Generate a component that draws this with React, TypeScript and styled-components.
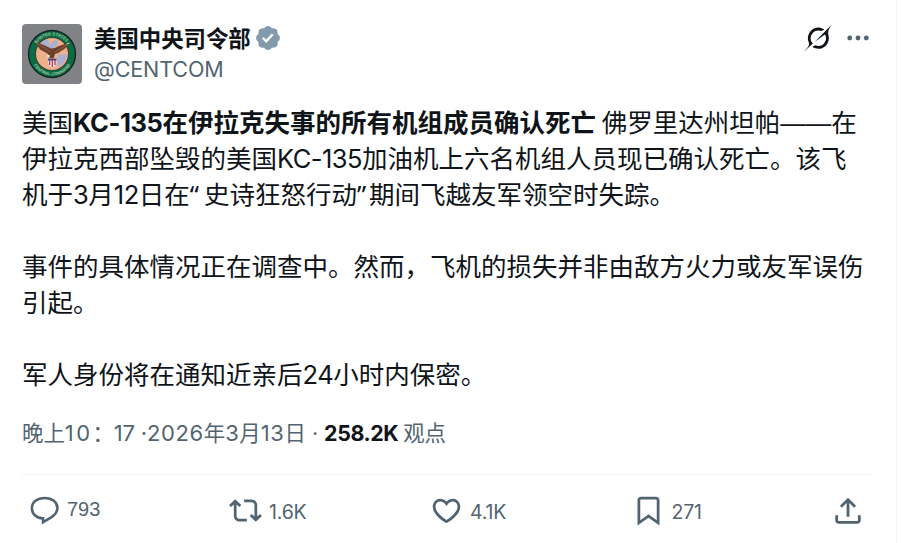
import React from "react";
import styled, { createGlobalStyle } from "styled-components";

const Tweet = () => {
  return (
    <Card>
      <Header>
        <Avatar>
          <Seal />
        </Avatar>
        <Names>
          <NameRow>
            <DisplayName>美国中央司令部</DisplayName>
            <Icon $size={28} viewBox="0 0 22 22" $color="#829aab">
              <path d={paths.verified} />
            </Icon>
          </NameRow>
          <Handle>@CENTCOM</Handle>
        </Names>
        <HeaderActions>
          <Icon $size={28} viewBox="0 0 33 32" $color="#0f1419">
            <path d={paths.grok} />
          </Icon>
          <Icon $size={26} viewBox="0 0 26 26">
            <circle cx="4.7" cy="13" r="2.4" />
            <circle cx="13" cy="13" r="2.4" />
            <circle cx="21.3" cy="13" r="2.4" />
          </Icon>
        </HeaderActions>
      </Header>

      <Body>
        <Line>
          美国
          <strong>
            <Latin $spacing={-0.4}>KC-135</Latin>在伊拉克失事的所有机组成员确认死亡
          </strong>{" "}
          佛罗里达州坦帕<Dash>——</Dash>在
        </Line>
        <Line>
          伊拉克西部坠毁的美国<Latin $spacing={-0.55}>KC-135</Latin>
          加油机上六名机组人员现已确认死亡。该飞
        </Line>
        <Line>
          机于<Latin>3</Latin>月<Latin>12</Latin>日在<Quote $spacing={5}>“</Quote>
          史诗狂怒行动<Quote $spacing={3}>”</Quote>期间飞越友军领空时失踪。
        </Line>
        <Line />
        <Line>事件的具体情况正在调查中。然而，飞机的损失并非由敌方火力或友军误伤</Line>
        <Line>引起。</Line>
        <Line />
        <Line>
          军人身份将在通知近亲后<Latin>24</Latin>小时内保密。
        </Line>
      </Body>

      <Meta>
        晚上<MetaLatin $spacing={2.4}>10</MetaLatin>：
        <MetaLatin $spacing={-0.2}>17 ·</MetaLatin>
        <MetaLatin $spacing={0.6}>2026</MetaLatin>年
        <MetaLatin $spacing={0.6}>3</MetaLatin>月
        <MetaLatin $spacing={0.6}>13</MetaLatin>日<Dot> · </Dot>
        <Views>258.2K</Views> 观点
      </Meta>

      <Actions>
        <Action>
          <ReplyIcon />
          <Count $plain>793</Count>
        </Action>
        <Action>
          <Icon $size={33} viewBox="0 0 24 24">
            <path d={paths.repost} />
          </Icon>
          <Count>1.6K</Count>
        </Action>
        <Action>
          <Icon $size={33} viewBox="0 0 24 24">
            <path d={paths.like} />
          </Icon>
          <Count>4.1K</Count>
        </Action>
        <Action>
          <Icon $size={33} viewBox="0 0 24 24">
            <path d={paths.bookmark} />
          </Icon>
          <Count>271</Count>
        </Action>
        <Action>
          <Icon $size={34} viewBox="0 0 24 24">
            <path d={paths.share} />
          </Icon>
        </Action>
      </Actions>
    </Card>
  );
};

const ReplyIcon = () => (
  <Icon $size={33} viewBox="0 0 33 33">
    <path
      d="M14.8 24.4C8.3 24 3.9 19.7 3.9 14.2C3.9 8.2 9.2 4 16.7 4S29.4 8.2 29.4 14C29.4 18.4 26.4 21.5 22.4 23.8L15 28.2V24.4Z"
      fill="none"
      stroke="#536471"
      strokeWidth="2.6"
    />
  </Icon>
);

const Seal = () => (
  <svg width="50" height="50" viewBox="0 0 50 50">
    <defs>
      <path id="sealTop" d="M6.4 25a18.6 18.6 0 0 1 37.2 0" />
      <path id="sealBottom" d="M3.6 25a21.4 21.4 0 0 0 42.8 0" />
    </defs>
    <circle cx="25" cy="25" r="24.2" fill="#10251f" />
    <circle cx="25" cy="25" r="22.8" fill="#0b6b45" />
    <circle cx="25" cy="25" r="16.8" fill="#3f3a2d" />
    <circle cx="25" cy="25" r="16" fill="#eeb08a" />
    <path d="M12 17l4-5 5-2 2 6 4-5 4 1-1 5-6 3zM31 25l5 1 4-1-1 6-4 5-4 2-1-6z" fill="#a9b0d3" />
    <path
      d="M7.5 12.3Q14 15 19 17L24 19.5L28 19Q33 16 42.5 14L38 19.5L31 24L28 25L26.5 29.5L22.5 29L20.5 24.5L13 20.5Z"
      fill="#6b402a"
    />
    <path d="M10 14.8l8 4.5 5 3.5M40 15.8l-8 5-4 2" stroke="#94623d" fill="none" />
    <path d="M7.5 12.3l3 1.5M42.5 14l-3 1.2" stroke="#d8d0c0" />
    <circle cx="21.5" cy="27" r="1.3" fill="#f2eadf" />
    <path d="M21 29.5h8.5v5q-1 3-4.2 4.3Q22 37.5 21 34.5z" fill="#f4e6e8" />
    <path d="M22.6 31v5M25.3 31v7M28 31v5" stroke="#b5364c" strokeWidth="1.3" />
    <path d="M21 29.5h8.5v2h-8.5z" fill="#4a4676" />
    <SealText>
      <textPath href="#sealTop" startOffset="50%" textAnchor="middle">
        UNITED STATES
      </textPath>
    </SealText>
    <SealText>
      <textPath href="#sealBottom" startOffset="50%" textAnchor="middle">
        CENTRAL COMMAND
      </textPath>
    </SealText>
  </svg>
);

const paths = {
  verified:
    "M20.396 11c-.018-.646-.215-1.275-.57-1.816-.354-.54-.852-.972-1.438-1.246.223-.607.27-1.264.14-1.897-.131-.634-.437-1.218-.882-1.687-.47-.445-1.053-.75-1.687-.882-.633-.13-1.29-.083-1.897.14-.273-.587-.704-1.086-1.245-1.44S11.647 1.62 11 1.604c-.646.017-1.273.213-1.813.568s-.969.854-1.24 1.44c-.608-.223-1.267-.272-1.902-.14-.635.13-1.22.436-1.69.882-.445.47-.749 1.055-.878 1.688-.13.633-.08 1.29.144 1.896-.587.274-1.087.705-1.443 1.245-.356.54-.555 1.17-.574 1.817.02.647.218 1.276.574 1.817.356.54.856.972 1.443 1.245-.224.606-.274 1.263-.144 1.896.13.634.433 1.218.877 1.688.47.443 1.054.747 1.687.878.633.132 1.29.084 1.897-.136.274.586.705 1.084 1.246 1.439.54.354 1.17.551 1.816.569.647-.016 1.276-.213 1.817-.567s.972-.854 1.245-1.44c.604.239 1.266.296 1.903.164.636-.132 1.22-.447 1.68-.907.46-.46.776-1.044.908-1.681s.075-1.299-.165-1.903c.586-.274 1.084-.705 1.439-1.246.354-.54.551-1.17.569-1.816zM9.662 14.85l-3.429-3.428 1.293-1.302 2.072 2.072 4.4-4.794 1.347 1.246z",
  grok: "M12.745 20.54l10.97-8.19c.539-.4 1.307-.244 1.564.38 1.349 3.288.746 7.241-1.938 9.955-2.683 2.714-6.417 3.31-9.83 1.954l-3.728 1.745c5.347 3.697 11.84 2.782 15.898-1.324 3.219-3.255 4.216-7.692 3.284-11.693l.008.009c-1.351-5.878.332-8.227 3.782-13.031L33 0l-4.54 4.59v-.014L12.743 20.544m-2.263 1.987c-3.837-3.707-3.175-9.446.1-12.755 2.42-2.449 6.388-3.448 9.852-1.979l3.72-1.737c-.67-.49-1.53-1.017-2.515-1.387-4.455-1.854-9.789-.931-13.41 2.728-3.483 3.523-4.579 8.94-2.697 13.561 1.405 3.454-.899 5.898-3.22 8.364C1.49 30.2.666 31.074 0 32l10.478-9.466",
  repost:
    "M4.5 3.88l4.432 4.14-1.364 1.46L5.5 7.55V16c0 1.1.896 2 2 2H13v2H7.5c-2.209 0-4-1.79-4-4V7.55L1.432 9.48.068 8.02 4.5 3.88zM16.5 6H11V4h5.5c2.209 0 4 1.79 4 4v8.45l2.068-1.93 1.364 1.46-4.432 4.14-4.432-4.14 1.364-1.46 2.068 1.93V8c0-1.1-.896-2-2-2z",
  like: "M16.697 5.5c-1.222-.06-2.679.51-3.89 2.16l-.805 1.09-.806-1.09C9.984 6.01 8.526 5.44 7.304 5.5c-1.243.07-2.349.78-2.91 1.91-.552 1.12-.633 2.78.479 4.82 1.074 1.97 3.257 4.27 7.129 6.61 3.87-2.34 6.052-4.64 7.126-6.61 1.111-2.04 1.03-3.7.477-4.82-.561-1.13-1.666-1.84-2.908-1.91zm4.187 7.69c-1.351 2.48-4.001 5.12-8.379 7.67l-.503.3-.504-.3c-4.379-2.55-7.029-5.19-8.382-7.67-1.36-2.5-1.41-4.86-.514-6.67.887-1.79 2.647-2.91 4.601-3.01 1.651-.09 3.368.56 4.798 2.01 1.429-1.45 3.146-2.1 4.796-2.01 1.954.1 3.714 1.22 4.601 3.01.896 1.81.846 4.17-.514 6.67z",
  bookmark:
    "M4 4.5C4 3.12 5.119 2 6.5 2h11C18.881 2 20 3.12 20 4.5v18.44l-8-5.71-8 5.71V4.5zM6.5 4c-.276 0-.5.22-.5.5v14.56l6-4.29 6 4.29V4.5c0-.28-.224-.5-.5-.5h-11z",
  share:
    "M12 2.59l5.7 5.7-1.41 1.42L13 6.41V16h-2V6.41l-3.3 3.3-1.41-1.42L12 2.59zM21 15l-.02 3.51c0 1.38-1.12 2.49-2.5 2.49H5.5C4.11 21 3 19.88 3 18.5V15h2v3.5c0 .28.22.5.5.5h12.98c.28 0 .5-.22.5-.5L19 15h2z",
};

/*-----------Styles----------------*/
const GlobalStyle = createGlobalStyle`
  * {
    box-sizing: border-box;
  }

  body {
    margin: 0;
    background: #fff;
    overflow: hidden;
  }
`;

const Card = styled.article`
  width: 897px;
  height: 543px;
  padding: 24px 24px 0 22px;
  border-right: 1px solid #eff3f4;
  color: #0f1419;
  font-family: "Noto Sans CJK SC", sans-serif;
`;

const Icon = styled.svg<{ $size: number; $color?: string }>`
  width: ${({ $size }) => $size}px;
  height: ${({ $size }) => $size}px;
  fill: ${({ $color }) => $color || "#536471"};
  flex-shrink: 0;
`;

const Header = styled.header`
  display: flex;
  height: 60px;
`;

const Avatar = styled.div`
  display: flex;
  align-items: center;
  justify-content: center;
  width: 60px;
  height: 60px;
  border-radius: 4px;
  background: #818286;
`;

const SealText = styled.text`
  font-family: "Liberation Sans", sans-serif;
  font-size: 4.2px;
  font-weight: bold;
  fill: #a5c9a5;
`;

const Names = styled.div`
  margin-left: 12px;
`;

const NameRow = styled.div`
  display: flex;
  align-items: center;
  gap: 3px;
  height: 28px;
`;

const DisplayName = styled.span`
  padding-bottom: 2px;
  font-size: 22.4px;
  line-height: 26px;
  font-weight: 700;
`;

const Handle = styled.div`
  font-family: Inter, sans-serif;
  font-size: 21.5px;
  line-height: 34px;
  letter-spacing: -0.1px;
  color: #536471;
`;

const HeaderActions = styled.div`
  display: flex;
  align-items: center;
  gap: 13px;
  height: 28px;
  margin-left: auto;
  padding-right: 1px;
`;

const Body = styled.div`
  margin-top: 19px;
  font-size: 25.5px;
`;

const Line = styled.p`
  height: 36px;
  margin: 0;
  line-height: 36px;
  white-space: nowrap;
`;

const Latin = styled.span<{ $spacing?: number }>`
  font-family: Inter, sans-serif;
  letter-spacing: ${({ $spacing = -0.5 }) => $spacing}px;
`;

const Dash = styled.span`
  font-family: "Liberation Sans", sans-serif;
`;

const Quote = styled(Latin)`
  font-family: "Noto Sans", sans-serif;
`;

const Meta = styled.div`
  height: 36px;
  margin-top: 23px;
  font-size: 21.4px;
  line-height: 36px;
  white-space: nowrap;
  color: #536471;
`;

const MetaLatin = styled(Latin)`
  font-size: 22px;
`;

const Dot = styled.span`
  font-family: Inter, sans-serif;
`;

const Views = styled.b`
  font-family: Inter, sans-serif;
  letter-spacing: -0.4px;
  color: #0f1419;
`;

const Actions = styled.footer`
  display: grid;
  grid-template-columns: 201px 201px 201.5px 199.5px 40px;
  width: 850px;
  margin-top: 24px;
  padding: 19px 0 0 6px;
  border-top: 1px solid #eff3f4;
`;

const Action = styled.div`
  display: flex;
  align-items: center;
  height: 33px;
  gap: 6px;
  color: #536471;
`;

const Count = styled.span<{ $plain?: boolean }>`
  padding: ${({ $plain }) => ($plain ? "0 0 3px" : "3px 0 0 1px")};
  font-family: ${({ $plain }) => ($plain ? '"Liberation Sans"' : "Inter")}, sans-serif;
  font-size: ${({ $plain }) => ($plain ? 20 : 19.5)}px;
  line-height: 24px;
  letter-spacing: ${({ $plain }) => ($plain ? 0 : -0.2)}px;
`;

const App = () => (
  <>
    <GlobalStyle />
    <Tweet />
  </>
);

export default App;
